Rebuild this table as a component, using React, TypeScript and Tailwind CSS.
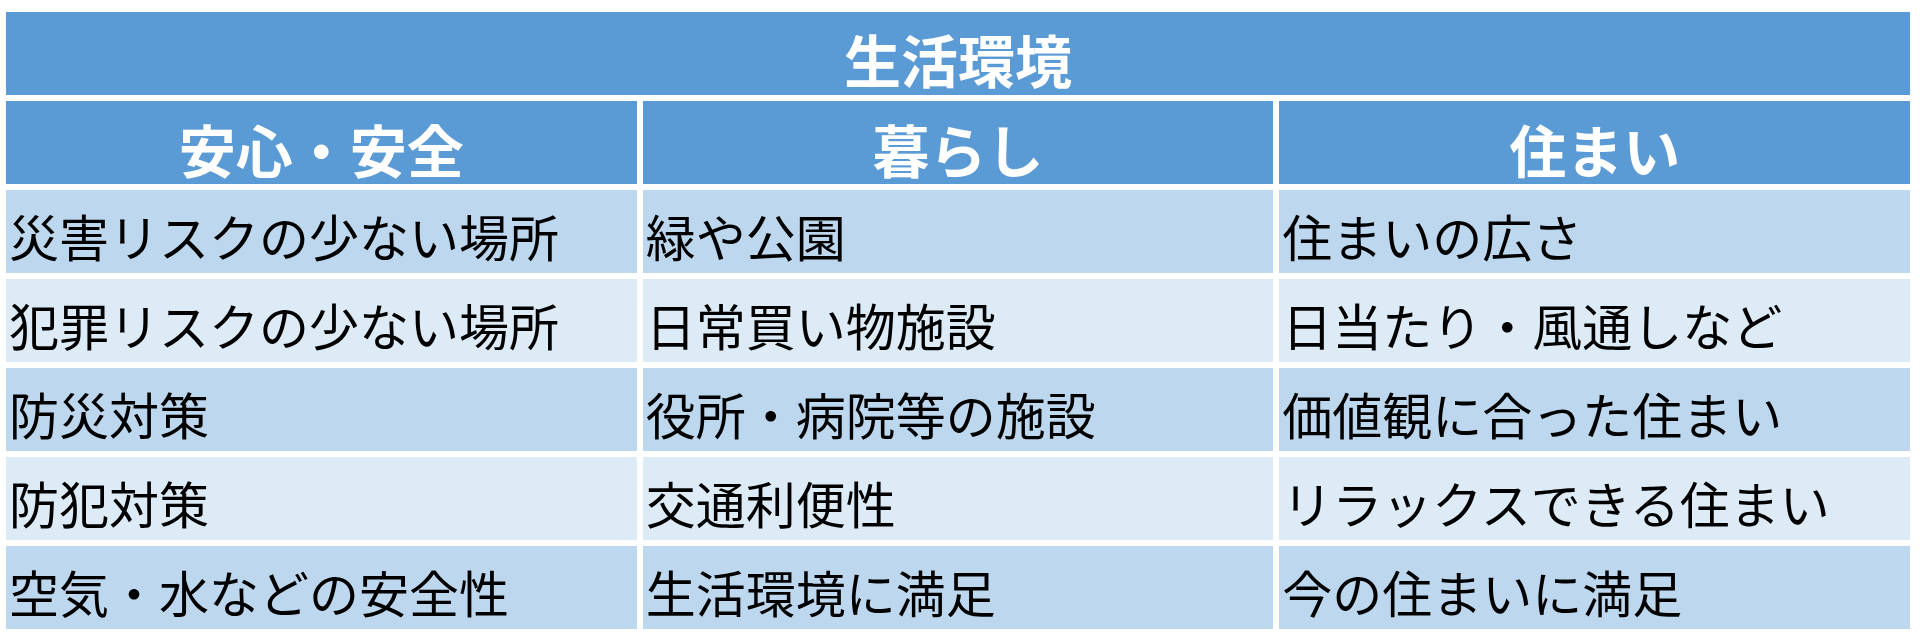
const rows = [
  ["災害リスクの少ない場所", "緑や公園", "住まいの広さ"],
  ["犯罪リスクの少ない場所", "日常買い物施設", "日当たり・風通しなど"],
  ["防災対策", "役所・病院等の施設", "価値観に合った住まい"],
  ["防犯対策", "交通利便性", "リラックスできる住まい"],
  ["空気・水などの安全性", "生活環境に満足", "今の住まいに満足"],
];

const headers = ["安心・安全", "暮らし", "住まい"];

const App = () => {
  return (
    <div className="w-[1920px] h-[640px] bg-white pt-[12px] pl-[6px] font-['Noto_Sans_CJK_JP','Noto_Sans',sans-serif]">
      <div className="w-[1904px] grid grid-cols-3 auto-rows-[83px] gap-[6px]">
        {/* Title */}
        <div className="col-span-3 bg-[#5b9bd5] flex items-center justify-center pt-[10px] text-white text-[57px] font-bold leading-none">
          生活環境
        </div>

        {/* Column headers */}
        {headers.map((h) => (
          <div
            key={h}
            className="bg-[#5b9bd5] flex items-center justify-center pt-[12px] text-white text-[57px] font-bold leading-none"
          >
            {h}
          </div>
        ))}

        {/* Body */}
        {rows.map((r, i) =>
          r.map((c, j) => (
            <div
              key={`${i}-${j}`}
              className={
                i % 2 === 0
                  ? "bg-[#bdd7ee] flex items-center pl-[3px] pt-[7px] text-black text-[50px] leading-none whitespace-nowrap"
                  : "bg-[#ddebf7] flex items-center pl-[3px] pt-[7px] text-black text-[50px] leading-none whitespace-nowrap"
              }
            >
              {c}
            </div>
          ))
        )}
      </div>
    </div>
  );
};

export default App;
